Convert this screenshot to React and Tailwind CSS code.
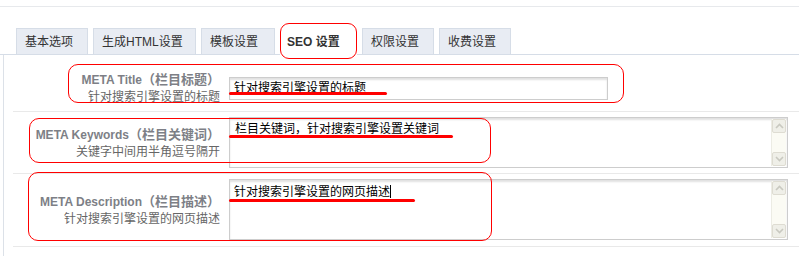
import React from "react";

const FONT = "font-['Liberation_Sans','Noto_Sans_CJK_SC',sans-serif]";

const tabs = [
  { label: "基本选项", w: "w-[72px]" },
  { label: "生成HTML设置", w: "w-[103px]" },
  { label: "模板设置", w: "w-[74px]" },
  { label: "SEO 设置", w: "w-[77px]", active: true },
  { label: "权限设置", w: "w-[72px]" },
  { label: "收费设置", w: "w-[72px]" },
];

const Chevron = ({ up }) => (
  <svg width="9" height="6" viewBox="0 0 9 6" className="block">
    <path
      d={up ? "M1 5 L4.5 1.5 L8 5" : "M1 1 L4.5 4.5 L8 1"}
      fill="none"
      stroke="#c9c9c0"
      strokeWidth="1.6"
    />
  </svg>
);

// old-style scrollbar drawn inside the textareas
const FakeScroll = () => (
  <div className="absolute right-[1px] top-[1px] bottom-[1px] w-[15px] bg-[#fbfbf4] flex flex-col justify-between border-l border-[#ecece4]">
    <div className="h-[14px] bg-[#efefe8] border border-[#dedcd2] rounded-[2px] flex items-center justify-center">
      <Chevron up />
    </div>
    <div className="h-[14px] bg-[#efefe8] border border-[#dedcd2] rounded-[2px] flex items-center justify-center">
      <Chevron />
    </div>
  </div>
);

const Label = ({ title, sub }) => (
  <div className="w-[207px] shrink-0 text-right leading-[17px]">
    <div className="font-bold text-[#7d7f86]">
      <span className="text-[12px]">{title[0]}</span>
      <span className="text-[13px]">{title[1]}</span>
    </div>
    <div className="text-[12px] text-[#666]">{sub}</div>
  </div>
);

const Box = ({ className, children }) => (
  <div
    className={`relative ml-[9px] border border-[#cdcdcd] bg-white shadow-[inset_0_2px_2px_rgba(0,0,0,0.12)] text-[12px] text-black ${className}`}
  >
    {children}
  </div>
);

export default function App() {
  return (
    <div className={`relative w-[799px] h-[256px] bg-white overflow-hidden ${FONT}`}>
      <div className="h-[7px] border-b border-[#e7e9ec]" />

      {/* tab bar */}
      <div className="mt-[21px] flex items-end gap-[5px] pl-[16px] border-b border-[#d6dde7]">
        {tabs.map((t) =>
          t.active ? (
            <div
              key={t.label}
              className={`${t.w} h-[26px] -mb-px bg-white pl-[7px] flex items-center text-[12px] font-bold text-[#333]`}
            >
              {t.label}
            </div>
          ) : (
            <div
              key={t.label}
              className={`${t.w} h-[26px] bg-[#e8ecf3] border border-b-0 border-[#d6dde7] pl-[8px] flex items-center text-[12px] text-[#333]`}
            >
              {t.label}
            </div>
          )
        )}
      </div>

      {/* panel */}
      <div className="ml-[3px] border-l border-[#dce1e8] pt-[10px] h-[201px]">
        <div className="ml-[9px] flex items-center py-[5px] border-b border-[#e9e9e9]">
          <Label title={["META Title", "（栏目标题）"]} sub="针对搜索引擎设置的标题" />
          <Box className="w-[379px] h-[23px] pl-[4px] flex items-center">针对搜索引擎设置的标题</Box>
        </div>
        <div className="ml-[9px] flex items-center py-[5px] border-b border-[#e9e9e9]">
          <Label title={["META Keywords", "（栏目关键词）"]} sub="关键字中间用半角逗号隔开" />
          <Box className="w-[559px] h-[51px] pl-[5px] pt-[2px] leading-[18px]">
            栏目关键词，针对搜索引擎设置关键词
            <FakeScroll />
          </Box>
        </div>
        <div className="ml-[9px] flex items-center pt-[5px] pb-[6px] border-b border-[#e9e9e9]">
          <Label title={["META Description", "（栏目描述）"]} sub="针对搜索引擎设置的网页描述" />
          <Box className="w-[559px] h-[61px] pl-[4px] pt-[3px] leading-[18px]">
            针对搜索引擎设置的网页描述
            <span className="inline-block w-px h-[13px] bg-black align-[-2px]" />
            <FakeScroll />
          </Box>
        </div>
      </div>

      {/* red annotations drawn over the screenshot */}
      <div className="absolute left-[280px] top-[23px] w-[77px] h-[36px] rounded-[9px] border border-[#ff0000]" />
      <div className="absolute left-[68px] top-[64px] w-[556px] h-[39px] rounded-[10px] border border-[#ff0000]" />
      <div className="absolute left-[29px] top-[118px] w-[462px] h-[45px] rounded-[10px] border border-[#ff0000]" />
      <div className="absolute left-[28px] top-[172px] w-[464px] h-[69px] rounded-[10px] border border-[#ff0000]" />
      <div className="absolute left-[229px] top-[92px] w-[158px] h-[3px] rounded-full bg-[#ff0000]" />
      <div className="absolute left-[229px] top-[135px] w-[224px] h-[3px] rounded-full bg-[#ff0000]" />
      <div className="absolute left-[229px] top-[199px] w-[186px] h-[3px] rounded-full bg-[#ff0000]" />
    </div>
  );
}
